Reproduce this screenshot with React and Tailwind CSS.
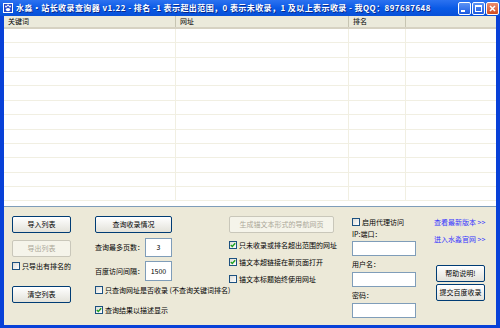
import React from "react";

const font = { fontFamily: '"Noto Sans CJK SC", "Liberation Sans", sans-serif' };

const XpButton = ({ children, disabled, className = "" }) => (
  <div
    className={
      "flex items-center justify-center rounded-[2px] border text-[7px] leading-none " +
      (disabled
        ? "border-[#c9c7ba] bg-[#f5f4ea] text-[#aca899] "
        : "border-[#003c74] bg-gradient-to-b from-white to-[#e3e2da] text-black ") +
      className
    }
  >
    {children}
  </div>
);

const Check = ({ checked, label, className = "" }) => (
  <div className={"flex items-center gap-[2px] whitespace-nowrap text-[7px] leading-none " + className}>
    <div className="flex h-[8px] w-[8px] shrink-0 items-center justify-center border border-[#1c5180] bg-gradient-to-br from-[#dcdcd7] to-white">
      {checked && (
        <svg width="6" height="6" viewBox="0 0 6 6">
          <path d="M0.8 3 L2.3 4.5 L5.2 1.2" stroke="#21a121" strokeWidth="1.4" fill="none" />
        </svg>
      )}
    </div>
    <span>{label}</span>
  </div>
);

const Field = ({ value, className = "" }) => (
  <div className={"flex items-center justify-center border border-[#7f9db9] bg-white text-[7px] leading-none " + className}>
    {value}
  </div>
);

const TitleButton = ({ kind }) => (
  <div
    className={
      "flex h-[13px] w-[13px] items-center justify-center rounded-[2px] border border-white " +
      (kind === "close" ? "bg-gradient-to-b from-[#e88d6f] to-[#d04a1c]" : "bg-gradient-to-b from-[#5c93f5] to-[#1c5ae0]")
    }
  >
    {kind === "min" && <div className="mt-[5px] mr-[3px] h-[2px] w-[4px] bg-white" />}
    {kind === "max" && <div className="h-[7px] w-[7px] border border-white border-t-2" />}
    {kind === "close" && (
      <svg width="7" height="7" viewBox="0 0 7 7">
        <path d="M1 1 L6 6 M6 1 L1 6" stroke="white" strokeWidth="1.5" />
      </svg>
    )}
  </div>
);

const rows = Array.from({ length: 12 });

export default function App() {
  return (
    <div className="flex h-[328px] w-[500px] flex-col bg-[#0841d8]" style={font}>
      {/* title bar */}
      <div className="flex h-[16px] items-center bg-gradient-to-b from-[#2b72f0] via-[#0a5be6] to-[#0750d8] pl-[3px] pr-[1px]">
        <div className="flex h-[10px] w-[10px] items-center justify-center border border-white bg-[#2447c8]">
          <svg width="8" height="8" viewBox="0 0 8 8">
            <circle cx="2" cy="2.5" r="1" fill="white" />
            <circle cx="4" cy="1.6" r="1" fill="white" />
            <circle cx="6" cy="2.5" r="1" fill="white" />
            <ellipse cx="4" cy="5.6" rx="2.2" ry="1.7" fill="white" />
          </svg>
        </div>
        <div className="ml-[3px] flex-1 whitespace-nowrap text-[8px] font-bold leading-none tracking-[0.42px] text-white [text-shadow:1px_1px_0_#0a2a8a]">
          水淼·站长收录查询器 v1.22 - 排名 -1 表示超出范围，0 表示未收录，1 及以上表示收录 - 我QQ：897687648
        </div>
        <div className="flex gap-[1px]">
          <TitleButton kind="min" />
          <TitleButton kind="max" />
          <TitleButton kind="close" />
        </div>
      </div>

      <div className="mx-[4px] mb-[3px] flex flex-1 flex-col bg-[#ece9d8]">
        {/* list view */}
        <div className="h-[191px] overflow-hidden border-b border-[#7f9db9] bg-white">
          <div className="flex h-[13px] border-b-2 border-[#d6d2c2] bg-[#ebeadb] text-[7px] leading-none">
            <div className="flex w-[172px] items-center border-r border-[#c7c5b2] pl-[4px]">关键词</div>
            <div className="flex w-[173px] items-center border-r border-[#c7c5b2] pl-[4px]">网址</div>
            <div className="flex w-[57px] items-center border-r border-[#c7c5b2] pl-[4px]">排名</div>
            <div className="flex-1" />
          </div>
          {rows.map((_, i) => (
            <div key={i} className="flex h-[14.36px] border-b border-[#f1efe2]">
              <div className="w-[172px] border-r border-[#f1efe2]" />
              <div className="w-[173px] border-r border-[#f1efe2]" />
              <div className="w-[57px] border-r border-[#f1efe2]" />
              <div className="flex-1" />
            </div>
          ))}
        </div>

        {/* control panel */}
        <div className="flex flex-1 pl-[8px] pt-[9px] text-black">
          {/* col 1 */}
          <div className="flex w-[59px] flex-col">
            <XpButton className="h-[17px]">导入列表</XpButton>
            <XpButton disabled className="mt-[7px] h-[17px]">导出列表</XpButton>
            <Check label="只导出有排名的" className="mt-[4px] h-[10px]" />
            <XpButton className="mt-[15px] h-[17px]">清空列表</XpButton>
          </div>

          {/* col 2 */}
          <div className="ml-[24px] flex w-[77px] flex-col">
            <XpButton className="h-[17px]">查询收录情况</XpButton>
            <div className="mt-[5px] flex h-[19px] items-center justify-between">
              <span className="text-[7px] leading-none">查询最多页数：</span>
              <Field value="3" className="h-[19px] w-[27px]" />
            </div>
            <div className="mt-[4px] flex h-[20px] items-center justify-between">
              <span className="text-[7px] leading-none">百度访问间隔：</span>
              <Field value="1500" className="h-[20px] w-[27px]" />
            </div>
            <Check label="只查询网址是否收录 (不查询关键词排名)" className="mt-[4px] h-[10px]" />
            <Check checked label="查询结果以描述显示" className="mt-[10px] h-[10px]" />
          </div>

          {/* col 3 */}
          <div className="ml-[57px] flex w-[105px] flex-col">
            <XpButton disabled className="h-[17px]">生成锚文本形式的导航网页</XpButton>
            <Check checked label="只未收录或排名超出范围的网址" className="mt-[7px] h-[10px]" />
            <Check checked label="锚文本超链接在新页面打开" className="mt-[7px] h-[10px]" />
            <Check label="锚文本标题始终使用网址" className="mt-[7px] h-[10px]" />
          </div>

          {/* col 4 */}
          <div className="ml-[18px] flex w-[65px] flex-col">
            <Check label="启用代理访问" className="mt-[1px] h-[10px]" />
            <span className="mt-[4px] text-[7px] leading-none">IP:端口：</span>
            <Field className="mt-[3px] h-[15px] w-[64px]" />
            <span className="mt-[5px] text-[7px] leading-none">用户名：</span>
            <Field className="mt-[4px] h-[15px] w-[64px]" />
            <span className="mt-[5px] text-[7px] leading-none">密码：</span>
            <Field className="mt-[4px] h-[15px] w-[64px]" />
          </div>

          {/* col 5 */}
          <div className="ml-[17px] flex w-[56px] flex-col">
            <span className="mt-[3px] whitespace-nowrap text-[7px] leading-none text-[#3535ff]">查看最新版本 &gt;&gt;</span>
            <span className="mt-[10px] whitespace-nowrap text-[7px] leading-none text-[#3535ff]">进入水淼官网 &gt;&gt;</span>
            <XpButton className="ml-[2px] mt-[22px] h-[17px] w-[49px]">帮助说明!</XpButton>
            <XpButton className="ml-[2px] mt-[2px] h-[17px] w-[49px]">提交百度收录</XpButton>
          </div>
        </div>
      </div>
    </div>
  );
}
